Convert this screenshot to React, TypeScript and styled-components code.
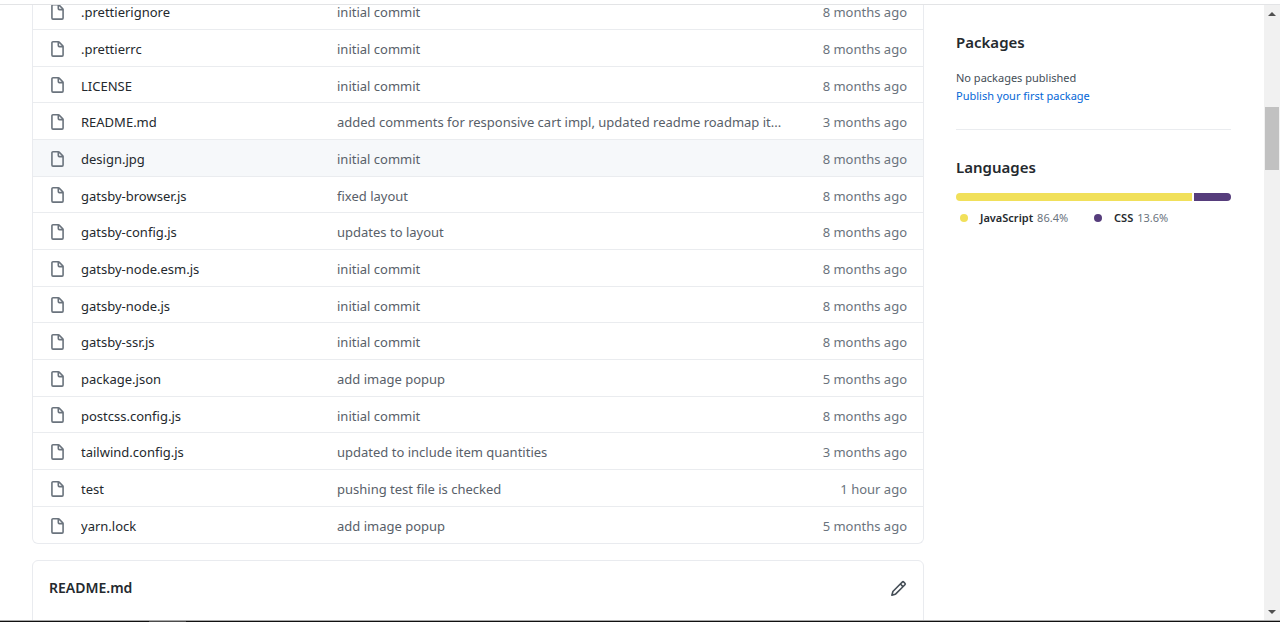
import React from "react";
import styled, { createGlobalStyle } from "styled-components";

const GlobalStyle = createGlobalStyle`
  *, *::before, *::after { box-sizing: border-box; }
  body {
    margin: 0;
    background: #fff;
    color: #24292e;
    font-family: "Noto Sans", "Open Sans", sans-serif;
    font-size: 13px;
    line-height: 20px;
  }
  a { color: inherit; text-decoration: none; }
  h2 { margin: 0; font-weight: 600; }
`;

const Frame = styled.div`
  display: flex;
  flex-direction: column;
  height: 100vh;
  overflow: hidden;
`;

const TopEdge = styled.div`
  flex: none;
  height: 5px;
  border-bottom: 1px solid #e3e4e6;
`;

const Viewport = styled.div`
  flex: 1;
  min-height: 0;
  display: flex;
`;

const BottomEdge = styled.div`
  flex: none;
  display: flex;
  height: 2px;
  padding-left: 149px;
  border-top: 1px solid #a8a8a8;
  background: #101010;
`;

const ActiveTask = styled.div`
  width: 37px;
  background: #4c4c4c;
`;

const Page = styled.div`
  flex: 1;
  min-width: 0;
  overflow: hidden;
  display: grid;
  grid-template-columns: minmax(0, 1fr) 275px;
  column-gap: 32px;
  padding: 0 33px 0 32px;
`;

const Main = styled.main`
  min-width: 0;
`;

/* The list is scrolled so that its first row is partly hidden. */
const FileBox = styled.section`
  margin-top: -13px;
  border: 1px solid #e9ebef;
  border-top: 0;
  border-radius: 0 0 6px 6px;
`;

const FileTable = styled.table`
  width: 100%;
  border-collapse: separate;
  border-spacing: 0;
  table-layout: fixed;
`;

const FileRow = styled.tr<{ $active?: boolean }>`
  height: 37px;
  background: ${(p) => (p.$active ? "#f6f8fa" : "transparent")};

  &:nth-child(3n) { height: 36px; }
  &:last-child { height: 37px; }
`;

const Cell = styled.td`
  padding: 2px 0 0;
  border-top: 1px solid #eaecef;
  overflow: hidden;
  white-space: nowrap;
`;

const IconCell = styled(Cell)`
  width: 48px;
  padding-left: 16px;
  color: #6a737d;
  svg { display: block; }
`;

const NameCell = styled(Cell)`
  width: 256px;
`;

const MessageCell = styled(Cell)`
  color: #586069;
`;

const AgeCell = styled(Cell)`
  width: 120px;
  padding-right: 16px;
  text-align: right;
  color: #6a737d;
`;

const ReadmeBox = styled.section`
  display: flex;
  align-items: flex-start;
  justify-content: space-between;
  height: 120px;
  margin-top: 16px;
  padding: 15px 16px;
  border: 1px solid #e9ebef;
  border-radius: 6px 6px 0 0;
`;

const ReadmeTitle = styled.h2`
  font-size: 14px;
  line-height: 24px;
`;

const IconButton = styled.button`
  display: flex;
  padding: 4px 0;
  border: 0;
  background: none;
  color: #444d56;
  cursor: pointer;
`;

const Sidebar = styled.aside`
  padding-top: 24px;
`;

const SideSection = styled.section`
  & + & {
    margin-top: 24px;
    padding-top: 24px;
    border-top: 1px solid #eaecef;
  }
`;

const SideTitle = styled.h2`
  font-size: 15px;
  line-height: 26px;
`;

const SideText = styled.div`
  margin-top: 14px;
  font-size: 11px;
  line-height: 18px;
  color: #444d56;
`;

const SideLink = styled.a`
  display: block;
  && { color: #0366d6; }
`;

const Bar = styled.div`
  display: flex;
  gap: 2px;
  height: 8px;
  margin-top: 13px;
  border-radius: 6px;
  overflow: hidden;
`;

const BarPart = styled.span<{ $share: number; $color: string }>`
  flex: ${(p) => p.$share} 1 0;
  background: ${(p) => p.$color};
`;

const Legend = styled.ul`
  display: flex;
  gap: 26px;
  margin: 8px 0 0;
  padding: 0 0 0 4px;
  list-style: none;
  font-size: 11px;
  line-height: 18px;
  color: #6a737d;
`;

const LegendLink = styled.a`
  display: flex;
  align-items: center;
  gap: 4px;
  strong { font-weight: 600; color: #24292e; }
`;

const Dot = styled.span<{ $color: string }>`
  width: 8px;
  height: 8px;
  margin-right: 8px;
  border-radius: 50%;
  background: ${(p) => p.$color};
`;

const Scrollbar = styled.div`
  flex: none;
  display: flex;
  flex-direction: column;
  width: 16px;
  padding: 0 1px;
  background: #f1f1f1;
`;

const ScrollArrow = styled.div`
  flex: none;
  display: flex;
  align-items: center;
  justify-content: center;
  height: 17px;
`;

const Track = styled.div`
  flex: 1;
  display: flex;
  flex-direction: column;
`;

const TrackGap = styled.div<{ $grow: number }>`
  flex: ${(p) => p.$grow} 1 0;
`;

const Thumb = styled.div`
  flex: 63 1 0;
  background: #c1c1c1;
`;

const FileIcon = () => (
  <svg width="17" height="17" viewBox="0 0 16 16" fill="currentColor" aria-hidden="true">
    <path
      fillRule="evenodd"
      d="M3.75 1.5a.25.25 0 00-.25.25v11.5c0 .138.112.25.25.25h8.5a.25.25 0 00.25-.25V6H9.75A1.75 1.75 0 018 4.25V1.5H3.75zm5.75.56v2.19c0 .138.112.25.25.25h2.19L9.5 2.06zM2 1.75C2 .784 2.784 0 3.75 0h5.086c.464 0 .909.184 1.237.513l3.414 3.414c.329.328.513.773.513 1.237v8.086A1.75 1.75 0 0112.25 15h-8.5A1.75 1.75 0 012 13.25V1.75z"
    />
  </svg>
);

const PencilIcon = () => (
  <svg width="17" height="17" viewBox="0 0 16 16" fill="currentColor" aria-hidden="true">
    <path
      fillRule="evenodd"
      d="M11.013 1.427a1.75 1.75 0 012.474 0l1.086 1.086a1.75 1.75 0 010 2.474l-8.61 8.61c-.21.21-.47.364-.756.445l-3.251.93a.75.75 0 01-.927-.928l.929-3.25a1.75 1.75 0 01.445-.758l8.61-8.61zm1.414 1.06a.25.25 0 00-.354 0L10.811 3.75l1.439 1.44 1.263-1.263a.25.25 0 000-.354l-1.086-1.086zM11.189 6.25L9.75 4.81l-6.286 6.287a.25.25 0 00-.064.108l-.558 1.953 1.953-.558a.249.249 0 00.108-.064l6.286-6.286z"
    />
  </svg>
);

const files = [
  { name: ".prettierignore", message: "initial commit", age: "8 months ago" },
  { name: ".prettierrc", message: "initial commit", age: "8 months ago" },
  { name: "LICENSE", message: "initial commit", age: "8 months ago" },
  {
    name: "README.md",
    message: "added comments for responsive cart impl, updated readme roadmap it...",
    age: "3 months ago",
  },
  { name: "design.jpg", message: "initial commit", age: "8 months ago", active: true },
  { name: "gatsby-browser.js", message: "fixed layout", age: "8 months ago" },
  { name: "gatsby-config.js", message: "updates to layout", age: "8 months ago" },
  { name: "gatsby-node.esm.js", message: "initial commit", age: "8 months ago" },
  { name: "gatsby-node.js", message: "initial commit", age: "8 months ago" },
  { name: "gatsby-ssr.js", message: "initial commit", age: "8 months ago" },
  { name: "package.json", message: "add image popup", age: "5 months ago" },
  { name: "postcss.config.js", message: "initial commit", age: "8 months ago" },
  { name: "tailwind.config.js", message: "updated to include item quantities", age: "3 months ago" },
  { name: "test", message: "pushing test file is checked", age: "1 hour ago" },
  { name: "yarn.lock", message: "add image popup", age: "5 months ago" },
];

const languages = [
  { name: "JavaScript", share: 86.4, color: "#f1e05a" },
  { name: "CSS", share: 13.6, color: "#563d7c" },
];

export default function App() {
  return (
    <>
      <GlobalStyle />
      <Frame>
        <TopEdge />
        <Viewport>
          <Page>
            <Main>
              <FileBox>
                <FileTable>
                  <tbody>
                    {files.map((f) => (
                      <FileRow key={f.name} $active={f.active}>
                        <IconCell>
                          <FileIcon />
                        </IconCell>
                        <NameCell>
                          <a href="#file">{f.name}</a>
                        </NameCell>
                        <MessageCell>
                          <a href="#commit">{f.message}</a>
                        </MessageCell>
                        <AgeCell>{f.age}</AgeCell>
                      </FileRow>
                    ))}
                  </tbody>
                </FileTable>
              </FileBox>
              <ReadmeBox>
                <ReadmeTitle>README.md</ReadmeTitle>
                <IconButton type="button" aria-label="Edit README">
                  <PencilIcon />
                </IconButton>
              </ReadmeBox>
            </Main>
            <Sidebar>
              <SideSection>
                <SideTitle>Packages</SideTitle>
                <SideText>
                  No packages published
                  <SideLink href="#publish">Publish your first package</SideLink>
                </SideText>
              </SideSection>
              <SideSection>
                <SideTitle>Languages</SideTitle>
                <Bar>
                  {languages.map((l) => (
                    <BarPart key={l.name} $share={l.share} $color={l.color} />
                  ))}
                </Bar>
                <Legend>
                  {languages.map((l) => (
                    <li key={l.name}>
                      <LegendLink href="#language">
                        <Dot $color={l.color} />
                        <strong>{l.name}</strong>
                        <span>{l.share}%</span>
                      </LegendLink>
                    </li>
                  ))}
                </Legend>
              </SideSection>
            </Sidebar>
          </Page>
          <Scrollbar aria-hidden="true">
            <ScrollArrow>
              <svg width="8" height="4" viewBox="0 0 8 4" fill="#505050">
                <path d="M0 4L4 0l4 4z" />
              </svg>
            </ScrollArrow>
            <Track>
              <TrackGap $grow={85} />
              <Thumb />
              <TrackGap $grow={433} />
            </Track>
            <ScrollArrow>
              <svg width="8" height="4" viewBox="0 0 8 4" fill="#505050">
                <path d="M0 0h8L4 4z" />
              </svg>
            </ScrollArrow>
          </Scrollbar>
        </Viewport>
        <BottomEdge>
          <ActiveTask />
        </BottomEdge>
      </Frame>
    </>
  );
}
